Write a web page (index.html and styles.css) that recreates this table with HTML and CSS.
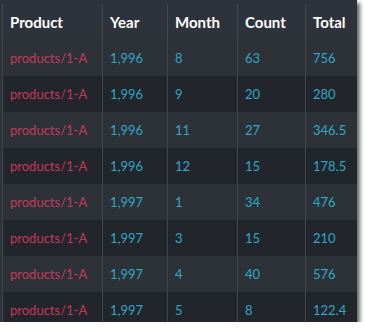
FILE: index.html
```html
<!DOCTYPE html>
<html lang="en">
<head>
    <meta charset="UTF-8">
    <title>Products by month</title>
    <link rel="stylesheet" href="styles.css">
</head>
<body>
<div class="frame">
    <table class="grid">
        <tr><th class="c-product">Product</th><th class="c-year">Year</th><th class="c-month">Month</th><th class="c-count">Count</th><th class="c-total">Total</th></tr>
        <tr><td class="product">products/1-A</td><td>1,996</td><td>8</td><td>63</td><td>756</td></tr>
        <tr><td class="product">products/1-A</td><td>1,996</td><td>9</td><td>20</td><td>280</td></tr>
        <tr><td class="product">products/1-A</td><td>1,996</td><td>11</td><td>27</td><td>346.5</td></tr>
        <tr><td class="product">products/1-A</td><td>1,996</td><td>12</td><td>15</td><td>178.5</td></tr>
        <tr><td class="product">products/1-A</td><td>1,997</td><td>1</td><td>34</td><td>476</td></tr>
        <tr><td class="product">products/1-A</td><td>1,997</td><td>3</td><td>15</td><td>210</td></tr>
        <tr><td class="product">products/1-A</td><td>1,997</td><td>4</td><td>40</td><td>576</td></tr>
        <tr><td class="product">products/1-A</td><td>1,997</td><td>5</td><td>8</td><td>122.4</td></tr>
    </table>
</div>
</body>
</html>
```

FILE: styles.css
```css
html, body {
    margin: 0;
    background: #fff;
}

.frame {
    width: 357px;
    height: 322px;
    overflow: hidden;
    background: #2e333b;
    box-shadow: 3px 3px 4px rgba(0, 0, 0, 0.6);
    padding-top: 4px;
    box-sizing: border-box;
}

.grid {
    margin-left: 2px;
    border-collapse: collapse;
    table-layout: fixed;
    width: 400px;
    font-family: 'Lato', sans-serif;
}

th, td {
    height: 36px;
    padding: 0 0 0 7px;
    text-align: left;
    border-left: 1px solid #414852;
    box-sizing: border-box;
    white-space: nowrap;
}

th {
    color: #fff;
    font-size: 15px;
    font-weight: bold;
}

td {
    color: #2fa8c6;
    font-size: 13px;
}

td.product {
    color: #c43a5c;
}

tr:nth-child(even) td {
    background: #2d3239;
}

tr:nth-child(odd) td {
    background: #22252b;
}

.c-product { width: 100px; }
.c-year { width: 65px; }
.c-month { width: 70px; }
.c-count { width: 68px; }
.c-total { width: 97px; }
```
